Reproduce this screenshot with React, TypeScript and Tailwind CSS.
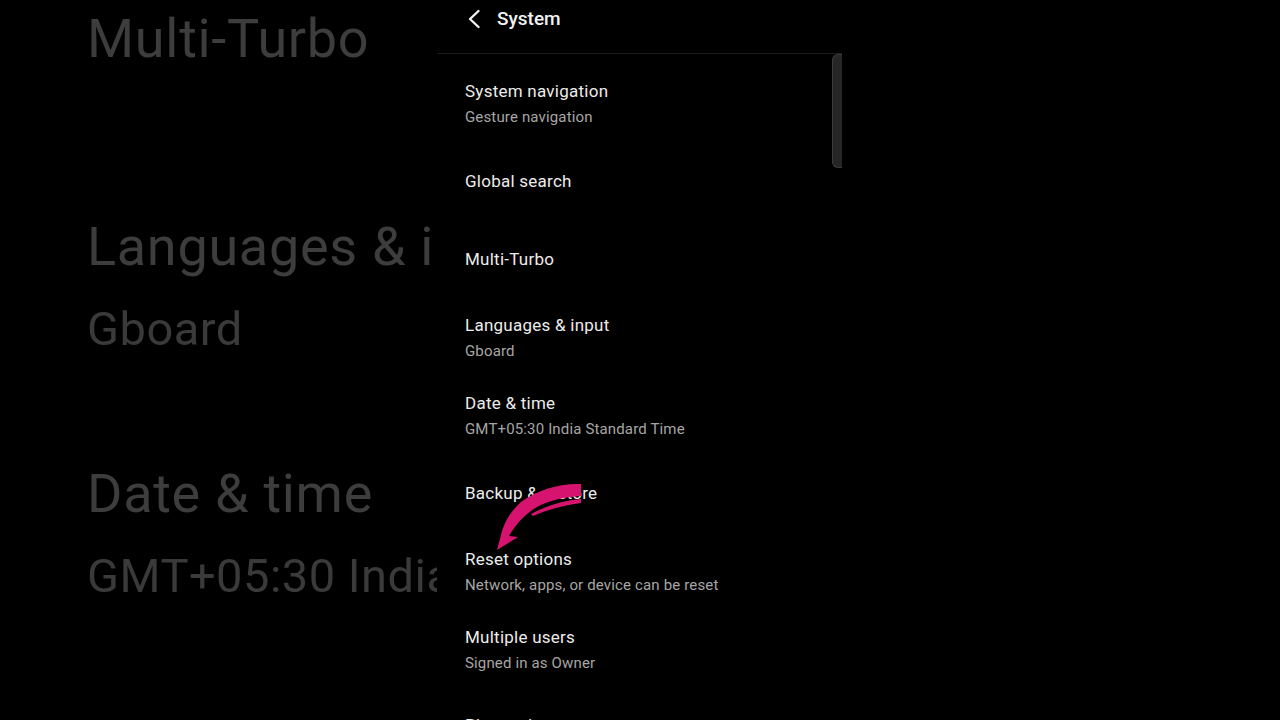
import React from 'react'

type Item = { title: string; sub?: string }

const items: Item[] = [
  { title: 'System navigation', sub: 'Gesture navigation' },
  { title: 'Global search' },
  { title: 'Multi-Turbo' },
  { title: 'Languages & input', sub: 'Gboard' },
  { title: 'Date & time', sub: 'GMT+05:30 India Standard Time' },
  { title: 'Backup & restore' },
  { title: 'Reset options', sub: 'Network, apps, or device can be reset' },
  { title: 'Multiple users', sub: 'Signed in as Owner' },
  { title: 'Phone clone' },
]

// zoomed-in, blurred copy of the list behind the phone frame
const bgItems: Item[] = [
  { title: 'Multi-Turbo' },
  { title: 'Languages & input', sub: 'Gboard' },
  { title: 'Date & time', sub: 'GMT+05:30 India Standard Time' },
]

function BackgroundList() {
  return (
    <div className="w-[437px] h-full overflow-hidden">
      <div className="-mt-[85px] pl-[87px] flex flex-col blur-[0.6px]">
        {bgItems.map((it) => (
          <div key={it.title} className="h-[247px] flex flex-col justify-center gap-[16px] whitespace-nowrap">
            <div className="text-[54px] leading-[69px] tracking-[0.7px] text-[#3d3d3d]">{it.title}</div>
            {it.sub && <div className="text-[47px] leading-[63px] tracking-[0.5px] text-[#3a3a3a]">{it.sub}</div>}
          </div>
        ))}
      </div>
    </div>
  )
}

function PinkArrow() {
  return (
    <svg
      className="absolute left-[43px] top-[469px] w-[140px] h-[90px]"
      viewBox="0 0 140 90"
      fill="#d6146f"
    >
      {/* main calligraphic stroke with arrowhead */}
      <path d="M101 15 C80 14 57 21 41 33 C31 42 25 52 22 62 L17 81 L38 68 L29 67 C36 55 45 45 57 38 C70 31 85 28 101 27 Z" />
      {/* thin inner stroke */}
      <path d="M101 30 C85 31 68 36 51 45 L53 47 C69 40 85 36 101 34 Z" />
    </svg>
  )
}

function Phone() {
  return (
    <div className="relative w-[405px] h-full overflow-hidden flex flex-col">
      <div className="h-[54px] shrink-0 border-b border-[#1c1c1c]">
        <div className="h-[38px] flex items-center pl-[30px] gap-[16px]">
          <svg width="14" height="20" viewBox="0 0 14 20" fill="none">
            <polyline
              points="11.5,2 3,10 11.5,18"
              stroke="#f2f2f2"
              strokeWidth="2.4"
              strokeLinecap="round"
              strokeLinejoin="round"
            />
          </svg>
          <span className="text-[19px] font-medium text-[#f2f2f2]">System</span>
        </div>
      </div>

      <div className="pt-[10px] flex flex-col">
        {items.map((it, i) => (
          <div
            key={it.title}
            className={
              i === items.length - 1
                ? 'h-[78px] shrink-0 pl-[28px] pt-[26px] whitespace-nowrap'
                : 'h-[78px] shrink-0 pl-[28px] flex flex-col justify-center gap-[5px] whitespace-nowrap'
            }
          >
            <div className="text-[17px] leading-[22px] tracking-[0.25px] text-[#ececec]">{it.title}</div>
            {it.sub && <div className="text-[15px] leading-[20px] tracking-[0.15px] text-[#a6a6a6]">{it.sub}</div>}
          </div>
        ))}
      </div>

      {/* scrollbar thumb */}
      <div className="absolute right-0 top-[54px] w-[10px] h-[114px] rounded-l-[6px] bg-[#262626] border border-r-0 border-[#3b3b3b]" />

      <PinkArrow />
    </div>
  )
}

export default function App() {
  return (
    <div className="w-[1280px] h-[720px] bg-black flex overflow-hidden font-['Roboto',sans-serif]">
      <BackgroundList />
      <Phone />
      <div className="flex-1" />
    </div>
  )
}
